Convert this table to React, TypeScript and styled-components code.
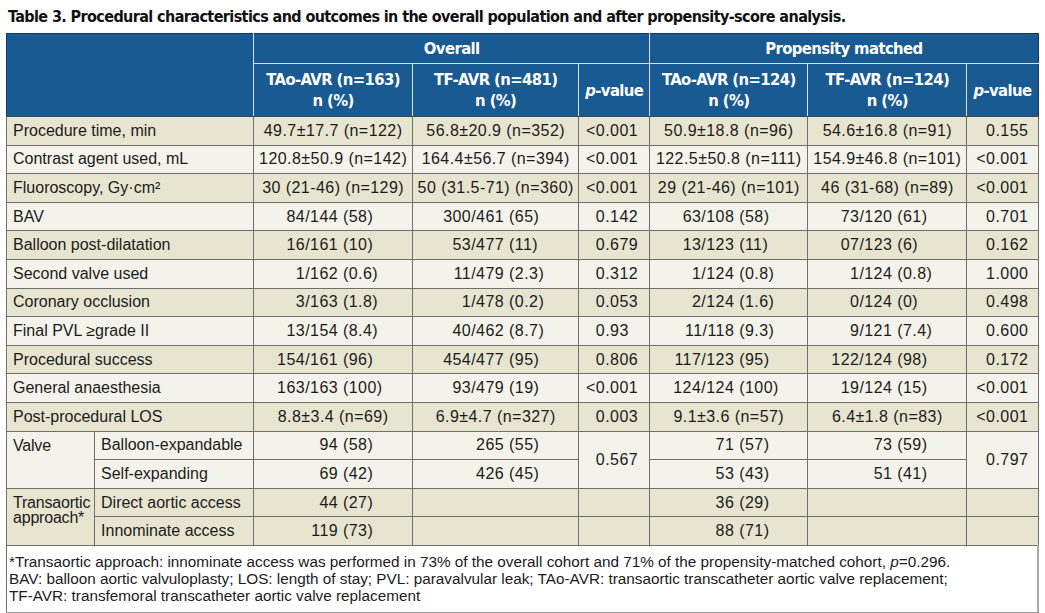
import React from 'react';
import styled, { createGlobalStyle } from 'styled-components';

const GlobalStyle = createGlobalStyle`
  body {
    margin: 0;
    background: #ffffff;
  }
`;

const condensed = `"Liberation Sans Narrow", "DejaVu Sans Condensed", "Liberation Sans", sans-serif`;

const Page = styled.div`
  padding: 3px 6px 0 6px;
  font-family: "Liberation Sans", Arial, sans-serif;
  color: #1b1b1b;
`;

const Title = styled.h1`
  margin: 0 0 0 2px;
  height: 30px;
  line-height: 28px;
  font-family: ${condensed};
  font-stretch: condensed;
  font-weight: bold;
  font-size: 16px;
  letter-spacing: -0.6px;
  color: #111;
`;

const Table = styled.table`
  width: 1033px;
  border-collapse: collapse;
  table-layout: fixed;
  border-left: 1px solid #3a3a3a;
`;

const HeadCell = styled.th<{ $h?: number; $dark?: boolean }>`
  height: ${p => p.$h ?? 28}px;
  padding: 0 2px;
  background: #195a92;
  color: #ffffff;
  font-family: ${condensed};
  font-stretch: condensed;
  font-weight: bold;
  font-size: 16.5px;
  letter-spacing: -0.6px;
  line-height: 21px;
  text-align: center;
  border: 1px solid #d5e0ea;
  border-top-color: #14385c;
  border-bottom-color: ${p => (p.$dark ? '#3d4a55' : '#d5e0ea')};
  &:last-child {
    border-right-color: #14385c;
  }
  &:first-child {
    border-left-color: #14385c;
  }
`;

const Row = styled.tr<{ $shade: boolean }>`
  height: 28.6px;
  background: ${p => (p.$shade ? '#e7e5d0' : '#f4f3eb')};
`;

const Cell = styled.td`
  padding: 0;
  border: 1px solid #6f6f6f;
  font-size: 16px;
  letter-spacing: 0.45px;
  white-space: nowrap;
  text-align: center;
  vertical-align: middle;
`;

const LabelCell = styled(Cell)<{ $top?: boolean }>`
  text-align: left;
  padding: ${p => (p.$top ? '6px 0 0 6px' : '0 0 0 6px')};
  letter-spacing: ${p => (p.$top ? '-0.2px' : '0')};
  line-height: ${p => (p.$top ? '15.5px' : 'normal')};
  vertical-align: ${p => (p.$top ? 'top' : 'middle')};
  white-space: ${p => (p.$top ? 'normal' : 'nowrap')};
`;

const PairCell = styled(Cell)`
  text-align: left;
`;

const Lead = styled.span<{ $w: number }>`
  display: inline-block;
  width: ${p => p.$w}px;
  text-align: right;
`;

const PCell = styled(Cell)`
  text-align: left;
`;

const Foot = styled.td`
  padding: 7px 6px 8px 2px;
  background: #ffffff;
  border: 1px solid #6f6f6f;
  border-right: 2px solid #a8a8a8;
  border-bottom: 2px solid #9a9a9a;
  font-size: 15.3px;
  line-height: 17px;
  text-align: left;
  white-space: nowrap;
`;

interface RowData {
  label: string;
  tao: string;
  tf: string;
  p: string;
  mtao: string;
  mtf: string;
  mp: string;
}

const rows: RowData[] = [
  { label: 'Procedure time, min', tao: '49.7±17.7 (n=122)', tf: '56.8±20.9 (n=352)', p: '<0.001', mtao: '50.9±18.8 (n=96)', mtf: '54.6±16.8 (n=91)', mp: '0.155' },
  { label: 'Contrast agent used, mL', tao: '120.8±50.9 (n=142)', tf: '164.4±56.7 (n=394)', p: '<0.001', mtao: '122.5±50.8 (n=111)', mtf: '154.9±46.8 (n=101)', mp: '<0.001' },
  { label: 'Fluoroscopy, Gy·cm²', tao: '30 (21-46) (n=129)', tf: '50 (31.5-71) (n=360)', p: '<0.001', mtao: '29 (21-46) (n=101)', mtf: '46 (31-68) (n=89)', mp: '<0.001' },
  { label: 'BAV', tao: '84/144 (58)', tf: '300/461 (65)', p: '0.142', mtao: '63/108 (58)', mtf: '73/120 (61)', mp: '0.701' },
  { label: 'Balloon post-dilatation', tao: '16/161 (10)', tf: '53/477 (11)', p: '0.679', mtao: '13/123 (11)', mtf: '07/123 (6)', mp: '0.162' },
  { label: 'Second valve used', tao: '1/162 (0.6)', tf: '11/479 (2.3)', p: '0.312', mtao: '1/124 (0.8)', mtf: '1/124 (0.8)', mp: '1.000' },
  { label: 'Coronary occlusion', tao: '3/163 (1.8)', tf: '1/478 (0.2)', p: '0.053', mtao: '2/124 (1.6)', mtf: '0/124 (0)', mp: '0.498' },
  { label: 'Final PVL ≥grade II', tao: '13/154 (8.4)', tf: '40/462 (8.7)', p: '0.93', mtao: '11/118 (9.3)', mtf: '9/121 (7.4)', mp: '0.600' },
  { label: 'Procedural success', tao: '154/161 (96)', tf: '454/477 (95)', p: '0.806', mtao: '117/123 (95)', mtf: '122/124 (98)', mp: '0.172' },
  { label: 'General anaesthesia', tao: '163/163 (100)', tf: '93/479 (19)', p: '<0.001', mtao: '124/124 (100)', mtf: '19/124 (15)', mp: '<0.001' },
  { label: 'Post-procedural LOS', tao: '8.8±3.4 (n=69)', tf: '6.9±4.7 (n=327)', p: '0.003', mtao: '9.1±3.6 (n=57)', mtf: '6.4±1.8 (n=83)', mp: '<0.001' },
];

// numbers like "84/144 (58)" line up on the bracket, means ± (n=) are centred
function Value({ text, lead }: { text: string; lead: number }) {
  const i = text.indexOf(' (');
  if (!text || i < 0 || text.includes('(n=')) return <Cell>{text}</Cell>;
  return (
    <PairCell>
      <Lead $w={lead}>{text.slice(0, i)}</Lead>
      {text.slice(i)}
    </PairCell>
  );
}

// p-values line up on the decimal point
function PValue({ text, lead, rowSpan }: { text: string; lead: number; rowSpan?: number }) {
  const i = text.indexOf('.');
  return (
    <PCell rowSpan={rowSpan}>
      <Lead $w={lead}>{text.slice(0, i)}</Lead>
      {text.slice(i)}
    </PCell>
  );
}

const LEAD = { tao: 84, tf: 91, mtao: 84, mtf: 84, p: 26, mp: 28 };

export default function App() {
  return (
    <Page>
      <GlobalStyle />
      <Title>
        Table 3. Procedural characteristics and outcomes in the overall population and after propensity-score analysis.
      </Title>
      <Table>
        <colgroup>
          <col style={{ width: 88 }} />
          <col style={{ width: 159 }} />
          <col style={{ width: 159 }} />
          <col style={{ width: 166 }} />
          <col style={{ width: 71 }} />
          <col style={{ width: 158 }} />
          <col style={{ width: 159 }} />
          <col style={{ width: 71 }} />
        </colgroup>
        <thead>
          <tr>
            <HeadCell colSpan={2} rowSpan={2} $dark />
            <HeadCell colSpan={3} $h={29}>Overall</HeadCell>
            <HeadCell colSpan={3} $h={29}>Propensity matched</HeadCell>
          </tr>
          <tr>
            <HeadCell $h={52} $dark>TAo-AVR (n=163)<br />n (%)</HeadCell>
            <HeadCell $dark>TF-AVR (n=481)<br />n (%)</HeadCell>
            <HeadCell $dark><i>p</i>-value</HeadCell>
            <HeadCell $dark>TAo-AVR (n=124)<br />n (%)</HeadCell>
            <HeadCell $dark>TF-AVR (n=124)<br />n (%)</HeadCell>
            <HeadCell $dark><i>p</i>-value</HeadCell>
          </tr>
        </thead>
        <tbody>
          {rows.map((r, idx) => (
            <Row key={r.label} $shade={idx % 2 === 0}>
              <LabelCell colSpan={2}>{r.label}</LabelCell>
              <Value text={r.tao} lead={LEAD.tao} />
              <Value text={r.tf} lead={LEAD.tf} />
              <PValue text={r.p} lead={LEAD.p} />
              <Value text={r.mtao} lead={LEAD.mtao} />
              <Value text={r.mtf} lead={LEAD.mtf} />
              <PValue text={r.mp} lead={LEAD.mp} />
            </Row>
          ))}
          <Row $shade={false}>
            <LabelCell rowSpan={2} $top>Valve</LabelCell>
            <LabelCell>Balloon-expandable</LabelCell>
            <Value text="94 (58)" lead={LEAD.tao} />
            <Value text="265 (55)" lead={LEAD.tf} />
            <PValue text="0.567" lead={LEAD.p} rowSpan={2} />
            <Value text="71 (57)" lead={LEAD.mtao} />
            <Value text="73 (59)" lead={LEAD.mtf} />
            <PValue text="0.797" lead={LEAD.mp} rowSpan={2} />
          </Row>
          <Row $shade={false}>
            <LabelCell>Self-expanding</LabelCell>
            <Value text="69 (42)" lead={LEAD.tao} />
            <Value text="426 (45)" lead={LEAD.tf} />
            <Value text="53 (43)" lead={LEAD.mtao} />
            <Value text="51 (41)" lead={LEAD.mtf} />
          </Row>
          <Row $shade>
            <LabelCell rowSpan={2} $top>Transaortic approach*</LabelCell>
            <LabelCell>Direct aortic access</LabelCell>
            <Value text="44 (27)" lead={LEAD.tao} />
            <Cell />
            <Cell />
            <Value text="36 (29)" lead={LEAD.mtao} />
            <Cell />
            <Cell />
          </Row>
          <Row $shade>
            <LabelCell>Innominate access</LabelCell>
            <Value text="119 (73)" lead={LEAD.tao} />
            <Cell />
            <Cell />
            <Value text="88 (71)" lead={LEAD.mtao} />
            <Cell />
            <Cell />
          </Row>
        </tbody>
        <tfoot>
          <tr>
            <Foot colSpan={8}>
              *Transaortic approach: innominate access was performed in 73% of the overall cohort and 71% of the propensity-matched cohort, <i>p</i>=0.296.
              <br />
              BAV: balloon aortic valvuloplasty; LOS: length of stay; PVL: paravalvular leak; TAo-AVR: transaortic transcatheter aortic valve replacement;
              <br />
              TF-AVR: transfemoral transcatheter aortic valve replacement
            </Foot>
          </tr>
        </tfoot>
      </Table>
    </Page>
  );
}
